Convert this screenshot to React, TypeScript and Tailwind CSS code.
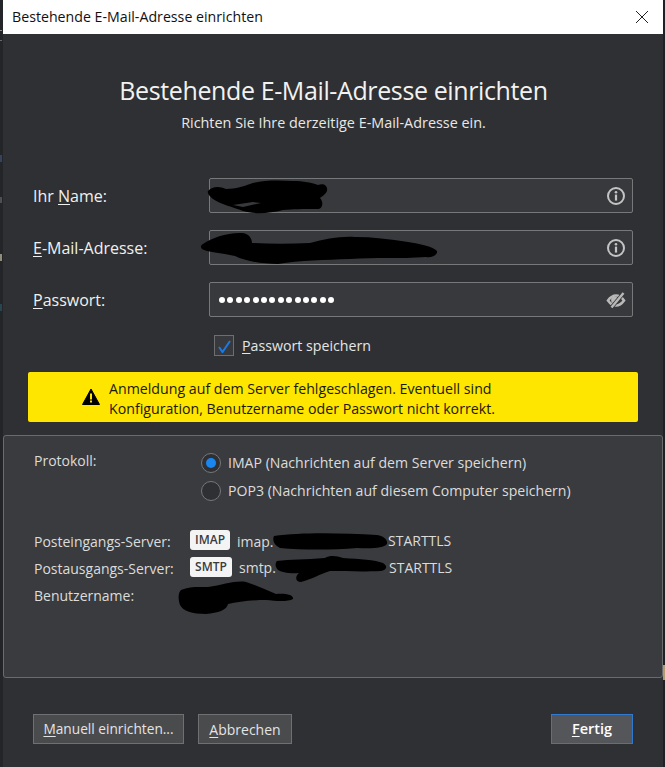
import React from "react";

function InfoIcon() {
  return (
    <svg width="20" height="20" viewBox="0 0 20 20" fill="none" className="shrink-0">
      <circle cx="10" cy="10" r="8" stroke="#c4c4c4" strokeWidth="2" />
      <circle cx="10" cy="6.2" r="1.3" fill="#c4c4c4" />
      <rect x="8.9" y="8.6" width="2.2" height="6" fill="#c4c4c4" />
    </svg>
  );
}

function EyeOffIcon() {
  return (
    <svg width="20" height="20" viewBox="0 0 20 20" fill="none" className="shrink-0">
      <path d="M2 10.5C4.5 7 7 5.5 10 5.5c3 0 5.5 1.5 8 5C15.5 14 13 15.5 10 15.5c-3 0-5.5-1.5-8-5Z" stroke="#b8b8b8" strokeWidth="2.6" />
      <circle cx="8.5" cy="10" r="3.4" fill="#b8b8b8" />
      <path d="M5 18 18 2.5" stroke="#38393c" strokeWidth="4" />
      <path d="M5.5 17.5 17.5 3" stroke="#b8b8b8" strokeWidth="2.4" />
    </svg>
  );
}

function U({ children }: { children: React.ReactNode }) {
  return <span className="underline underline-offset-2 decoration-1">{children}</span>;
}

function Field({ label, children, icon }: { label: React.ReactNode; children?: React.ReactNode; icon: React.ReactNode }) {
  return (
    <div className="flex items-center h-[35px]">
      <div className="w-[206px] pl-[30px] text-[16px] text-[#f0f0f0] mt-[1px]">{label}</div>
      <div className="w-[424px] h-[35px] flex items-center justify-between pl-[9px] pr-[6px] rounded-[2px] border border-[#77787a] bg-[#38393c]">
        <div>{children}</div>
        {icon}
      </div>
    </div>
  );
}

function Scribble({ className, d, w, h }: { className: string; d: string; w: number; h: number }) {
  return (
    <svg width={w} height={h} viewBox={`0 0 ${w} ${h}`} className={`absolute overflow-visible ${className}`}>
      <path d={d} fill="#000" fillRule="evenodd" />
    </svg>
  );
}

export default function App() {
  return (
    <div className="relative w-[665px] h-[767px] overflow-hidden bg-[#2e3033] font-['Open_Sans','Noto_Sans',sans-serif] pl-[3px]">
      {/* slivers of the window behind, showing at the left and right edges */}
      <div className="absolute left-0 top-0 h-full w-[3px] bg-[#232528]">
        <span className="absolute left-0 top-[30px] w-[2px] h-[1px] bg-[#8a8a8a]" />
        <span className="absolute left-0 top-[40px] w-[2px] h-[1px] bg-[#6a6a6a]" />
        <span className="absolute left-0 top-[155px] w-[2px] h-[7px] bg-[#34445f]" />
        <span className="absolute left-0 top-[197px] w-[2px] h-[6px] bg-[#4f4f4f]" />
        <span className="absolute left-0 top-[254px] w-[2px] h-[7px] bg-[#8e8e7a]" />
        <span className="absolute left-0 top-[304px] w-[2px] h-[7px] bg-[#2a4552]" />
      </div>
      <div className="absolute right-0 top-0 h-full w-[2px] bg-[#1f2124]">
        <span className="absolute left-0 top-[665px] w-[2px] h-[15px] bg-[#b09a70]" />
      </div>

      <div className="h-[34px] w-[660px] bg-white flex items-center justify-between pl-[9px] pr-[14px] text-[14.2px] text-[#111]">
        <span>Bestehende E-Mail-Adresse einrichten</span>
        <svg width="14" height="14" viewBox="0 0 14 14" fill="none">
          <path d="M1 1 13 13M13 1 1 13" stroke="#222" strokeWidth="1" />
        </svg>
      </div>

      <div className="pt-[38px] text-center pr-[1px] text-[#f2f2f2]">
        <h1 className="text-[25px] leading-[36px] tracking-[-0.38px] font-normal">Bestehende E-Mail-Adresse einrichten</h1>
        <p className="mt-[5px] text-[14.4px] leading-[20px] text-[#e8e8e8]">Richten Sie Ihre derzeitige E-Mail-Adresse ein.</p>
      </div>

      <div className="mt-[45px] flex flex-col gap-[17px]">
        <Field label={<>Ihr <U>N</U>ame:</>} icon={<InfoIcon />} />
        <Field label={<><U>E</U>-Mail-Adresse:</>} icon={<InfoIcon />} />
        <Field
          label={<><U>P</U>asswort:</>}
          icon={<EyeOffIcon />}
        >
          <div className="flex gap-[2.4px]">
            {Array.from({ length: 14 }).map((_, i) => (
              <span key={i} className="w-[6px] h-[6px] rounded-full bg-white" />
            ))}
          </div>
        </Field>
      </div>

      <div className="mt-[18px] ml-[211px] flex items-center gap-[8px] h-[21px]">
        <div className="w-[20px] h-[21px] border border-[#6d6e70] bg-[#38393c] flex items-center justify-center">
          <svg width="14" height="14" viewBox="0 0 14 14" fill="none">
            <path d="M2 8 5.5 13 13 2" stroke="#1f7ae0" strokeWidth="2" />
          </svg>
        </div>
        <span className="text-[14.2px] text-[#e6e6e6]"><U>P</U>asswort speichern</span>
      </div>

      <div className="mt-[16px] ml-[25px] w-[610px] h-[50px] rounded-[2px] bg-[#ffe600] flex items-center text-[#1a1a00] text-[14.2px] leading-[20px]">
        <svg width="18" height="18" viewBox="0 0 18 18" className="ml-[54px] mr-[9px] shrink-0">
          <path d="M9 1 17.5 16.5H.5Z" fill="#000" stroke="#000" strokeWidth="1" strokeLinejoin="round" />
          <rect x="8" y="5.5" width="2" height="6" fill="#ffe600" />
          <rect x="8" y="12.5" width="2" height="2" fill="#ffe600" />
        </svg>
        <p className="mt-[4px]">Anmeldung auf dem Server fehlgeschlagen. Eventuell sind<br />Konfiguration, Benutzername oder Passwort nicht korrekt.</p>
      </div>

      <div className="mt-[13px] ml-0 w-[660px] h-[243px] rounded-[3px] border border-[#6a6b6d] bg-[#3a3b3e] pl-[30px] text-[14px] text-[#dcdcdc]">
        <div className="flex pt-[15px]">
          <div className="w-[167px] leading-[20px]">Protokoll:</div>
          <div className="flex flex-col gap-[8px] pt-[2px]">
            <div className="flex items-center gap-[7px] h-[20px] text-[14.1px]">
              <span className="w-[20px] h-[20px] rounded-full border border-[#77787a] bg-[#2f3033] flex items-center justify-center">
                <span className="w-[10px] h-[10px] rounded-full bg-[#1a86f0]" />
              </span>
              <span>IMAP (Nachrichten auf dem Server speichern)</span>
            </div>
            <div className="flex items-center gap-[7px] h-[20px] text-[14.1px]">
              <span className="w-[20px] h-[20px] rounded-full border border-[#77787a] bg-[#2f3033]" />
              <span>POP3 (Nachrichten auf diesem Computer speichern)</span>
            </div>
          </div>
        </div>

        <div className="mt-[29px] flex flex-col gap-[7px]">
          <div className="flex items-center h-[20px]">
            <span className="w-[156px] mt-[2px]">Posteingangs-Server:</span>
            <span className="w-[40px] h-[20px] rounded-[3px] bg-[#f4f4f5] text-[#3a3b3e] text-[12px] font-semibold flex items-center justify-center">IMAP</span>
            <span className="ml-[7px] w-[151px] mt-[2px]">imap.</span>
            <span className="mt-[1px]">STARTTLS</span>
          </div>
          <div className="flex items-center h-[20px]">
            <span className="w-[156px] mt-[2px]">Postausgangs-Server:</span>
            <span className="w-[42px] h-[20px] rounded-[3px] bg-[#f4f4f5] text-[#3a3b3e] text-[12px] font-semibold flex items-center justify-center">SMTP</span>
            <span className="ml-[7px] w-[150px] mt-[1px]">smtp.</span>
            <span className="mt-[1px]">STARTTLS</span>
          </div>
          <div className="flex items-center h-[20px]">
            <span className="mt-[2px]">Benutzername:</span>
          </div>
        </div>
      </div>

      <div className="mt-[36px] ml-[30px] w-[600px] flex items-center gap-[14px] text-[14px] text-[#e4e4e4]">
        <button className="w-[151px] h-[30px] border border-[#6f7072] bg-[#4a4b4d] text-[13.7px]"><U>M</U>anuell einrichten...</button>
        <button className="w-[94px] h-[30px] border border-[#6f7072] bg-[#4a4b4d]"><U>A</U>bbrechen</button>
        <button className="ml-auto w-[82px] h-[30px] border border-[#2f7ad0] bg-[#55565a] font-semibold text-[14.5px] text-white"><U>F</U>ertig</button>
      </div>

      {/* hand-drawn redactions lying over the fields */}
      <Scribble className="left-[208px] top-[180px]" w={120} h={34}
        d="M0 11C4 6 12 6 18 9C28 9 36 6 42 4C52 0 70 0 85 1C95 1 105 3 110 5C116 3 120 6 119 11C117 15 113 17 112 18C116 22 115 30 108 29C95 29 85 29 75 30C60 34 45 34 35 31C25 27 12 24 5 19C1 16 -1 13 0 11ZM25 25L45 22L53 23L35 27Z" />
      <Scribble className="left-[200px] top-[231px]" w={240} h={34}
        d="M3 13C12 7 25 2 40 2C48 1 52 7 52 12C70 13 90 13 110 12C125 8 140 5 155 6C172 6 190 8 208 11C220 13 232 15 237 20C238 24 232 27 226 26C200 28 175 26 150 28C125 29 100 29 78 33C62 33 45 30 35 25C22 22 6 21 2 18C0 16 1 14 3 13Z" />
      <Scribble className="left-[272px] top-[533px]" w={116} h={17}
        d="M2 3C30 -1 70 0 105 2C112 3 116 7 115 11C112 15 100 16 85 15C60 17 30 17 8 15C2 12 0 7 2 3Z" />
      <Scribble className="left-[275px] top-[556px]" w={113} h={28}
        d="M2 5C15 3 30 4 50 2C55 -1 62 0 68 2C85 3 100 4 108 7C113 10 112 14 106 15C85 16 70 15 55 15C45 18 35 24 26 26C20 26 20 20 24 17C15 18 6 16 3 14C0 11 0 7 2 5Z" />
      <Scribble className="left-[178px] top-[581px]" w={116} h={33}
        d="M3 9C12 5 22 6 30 6C45 4 58 -1 68 1C78 4 88 9 98 13C108 12 116 14 115 18C110 21 98 20 88 19C72 19 60 21 50 23C49 29 40 32 28 33C14 33 5 30 2 24C0 18 0 12 3 9Z" />
    </div>
  );
}
